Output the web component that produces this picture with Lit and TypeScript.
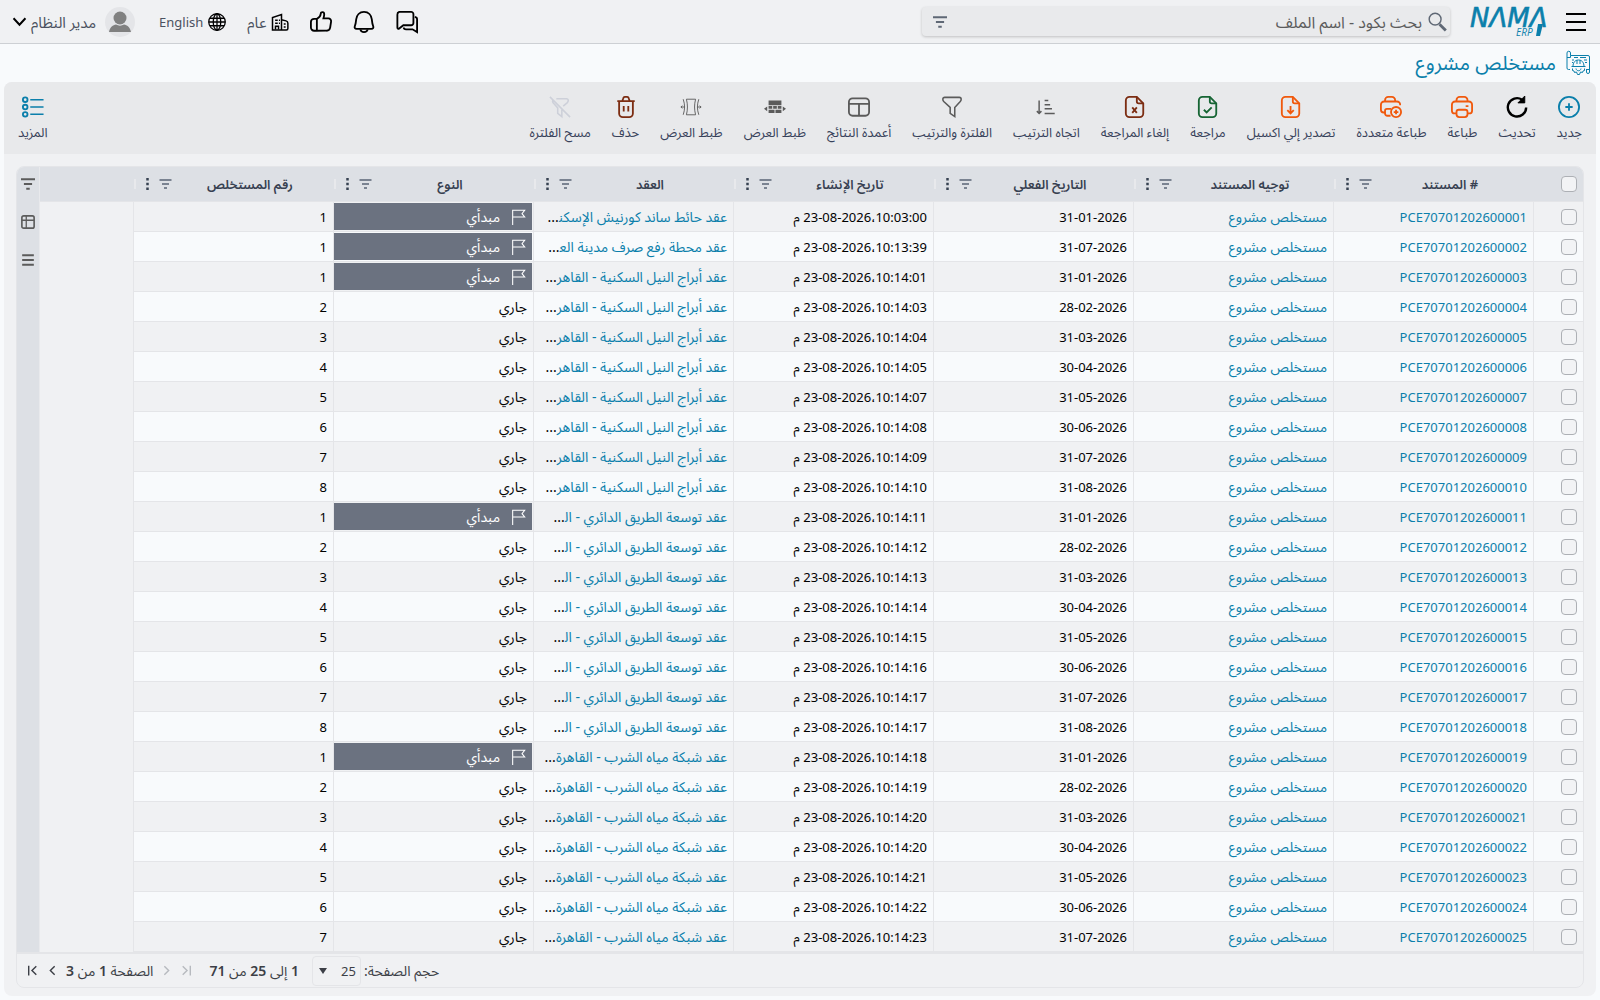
import { LitElement, html, css, svg, nothing } from "lit";
import { customElement, property, state } from "lit/decorators.js";

interface Invoice {
  code: string;
  date: string;
  created: string;
  contract: string;
  initial: boolean;
  number: number;
}

interface Tool {
  icon: string;
  label: string;
  tone?: string;
}

// short names; \u200d keeps the last letter in its joined form before the dots
const CONTRACTS = {
  wall: "عقد حائط ساند كورنيش الإسكن\u200d",
  station: "عقد محطة رفع صرف مدينة الع\u200d",
  towers: "عقد أبراج النيل السكنية - القاهر",
  road: "عقد توسعة الطريق الدائري - ال\u200d",
  water: "عقد شبكة مياه الشرب - القاهرة",
};

const MONTH_ENDS = ["31-01", "28-02", "31-03", "30-04", "31-05", "30-06", "31-07", "31-08"];

// contract, invoice number, month index, creation time
const SOURCE: [keyof typeof CONTRACTS, number, number, string][] = [
  ["wall", 1, 0, "10:03:00"],
  ["station", 1, 6, "10:13:39"],
  ["towers", 1, 0, "10:14:01"],
  ["towers", 2, 1, "10:14:03"],
  ["towers", 3, 2, "10:14:04"],
  ["towers", 4, 3, "10:14:05"],
  ["towers", 5, 4, "10:14:07"],
  ["towers", 6, 5, "10:14:08"],
  ["towers", 7, 6, "10:14:09"],
  ["towers", 8, 7, "10:14:10"],
  ["road", 1, 0, "10:14:11"],
  ["road", 2, 1, "10:14:12"],
  ["road", 3, 2, "10:14:13"],
  ["road", 4, 3, "10:14:14"],
  ["road", 5, 4, "10:14:15"],
  ["road", 6, 5, "10:14:16"],
  ["road", 7, 6, "10:14:17"],
  ["road", 8, 7, "10:14:17"],
  ["water", 1, 0, "10:14:18"],
  ["water", 2, 1, "10:14:19"],
  ["water", 3, 2, "10:14:20"],
  ["water", 4, 3, "10:14:20"],
  ["water", 5, 4, "10:14:21"],
  ["water", 6, 5, "10:14:22"],
  ["water", 7, 6, "10:14:23"],
];

const ROWS: Invoice[] = SOURCE.map(([contract, number, month, time], i) => ({
  code: `PCE707012026${String(i + 1).padStart(5, "0")}`,
  date: `${MONTH_ENDS[month]}-2026`,
  created: `23-08-2026،${time} م`,
  contract: CONTRACTS[contract],
  initial: number === 1,
  number,
}));

const COLUMNS = ["# المستند", "توجيه المستند", "التاريخ الفعلي", "تاريخ الإنشاء", "العقد", "النوع", "رقم المستخلص"];

const TOOLS: Tool[] = [
  { icon: "add", label: "جديد", tone: "blue" },
  { icon: "refresh", label: "تحديث", tone: "black" },
  { icon: "print", label: "طباعة", tone: "orange" },
  { icon: "printMany", label: "طباعة متعددة", tone: "orange" },
  { icon: "exportFile", label: "تصدير إلي اكسيل", tone: "orange" },
  { icon: "review", label: "مراجعة", tone: "green" },
  { icon: "unreview", label: "إلغاء المراجعة", tone: "red" },
  { icon: "sort", label: "اتجاه الترتيب" },
  { icon: "funnel", label: "الفلترة والترتيب" },
  { icon: "columns", label: "أعمدة النتائج" },
  { icon: "fitSolid", label: "ظبط العرض" },
  { icon: "fitOutline", label: "ظبط العرض" },
  { icon: "trash", label: "حذف", tone: "red" },
  { icon: "clearFilter", label: "مسح الفلترة", tone: "muted" },
];

const FILE = svg`<path d="M6 1h8l7 7v11a4 4 0 0 1-4 4H6a4 4 0 0 1-4-4V5a4 4 0 0 1 4-4z"/><path d="M14 1v5a2 2 0 0 0 2 2H21"/>`;

// every drawing sits on a 24 x 24 board
const ICONS: Record<string, unknown> = {
  add: svg`<circle cx="12" cy="12" r="11"/><path d="M12 8v8M8 12h8"/>`,
  refresh: svg`<path d="M22 12.500A10 10 0 1 1 17.500 4" stroke-width="2.600"/><path d="M20.500 0v7.500h-7.500z" fill="currentColor" stroke-width="1"/>`,
  print: svg`<path d="M6 6V4.500a3.500 3.500 0 0 1 3.500-3.500h5A3.500 3.500 0 0 1 18 4.500V6"/><path d="M6 19H4a3 3 0 0 1-3-3V9.500A3.500 3.500 0 0 1 4.500 6h15A3.500 3.500 0 0 1 23 9.500V16a3 3 0 0 1-3 3h-2"/><path d="M8.500 15h7a2.500 2.500 0 0 1 2.500 2.500V20a3 3 0 0 1-3 3H9a3 3 0 0 1-3-3v-2.500A2.500 2.500 0 0 1 8.500 15z"/><path d="M16 11h3"/>`,
  printMany: svg`<path d="M5.500 6V4.500A3.500 3.500 0 0 1 9 1h4a3.500 3.500 0 0 1 3.500 3.500V6"/><path d="M5.500 18H4a3 3 0 0 1-3-3V9.500A3.500 3.500 0 0 1 4.500 6h14A3.500 3.500 0 0 1 22 9.500V10"/><path d="M12 14H7.500a2 2 0 0 0-2 2v3a2.500 2.500 0 0 0 2.500 2.500h3.500"/><circle cx="17.500" cy="17.500" r="5.500"/><path d="M17.500 15v5M15 17.500h5"/>`,
  exportFile: svg`${FILE}<path d="M11.500 11v8M8 15.500l3.500 3.500 3.500-3.500"/>`,
  review: svg`${FILE}<path d="M7.500 15l3 3 5.500-5.500"/>`,
  unreview: svg`${FILE}<path d="M9 12.500l5 6M14 12.500l-5 6"/>`,
  sort: svg`<path d="M4.500 5v14M2 16.500l2.500 2.500 2.500-2.500M10.500 5h4M10.500 9.500h6M10.500 14h8M10.500 19h11" stroke-width="1.600"/>`,
  funnel: svg`<path d="M4 1.500h16a2 2 0 0 1 2 2c0 1-.4 1.800-1 2.500L15 12.500V22.500l-5-3.500v-6.500L3 6c-.6-.7-1-1.500-1-2.500a2 2 0 0 1 2-2z" stroke-width="1.700"/>`,
  columns: svg`<rect x="1" y="2.500" width="22" height="19" rx="4"/><path d="M1 8.500h22M12 8.500v13"/>`,
  fitSolid: svg`<g fill="currentColor" stroke="none"><path d="M5 5h14v5H5zM5 11h4v3H5zM10 11h4v3h-4zM15 11h4v3h-4zM5 15h6.500v3.500H5zM12.500 15H19v3.500h-6.500zM3.500 11.500v5L0 14zM20.500 11.500v5L24 14z"/></g>`,
  fitOutline: svg`<g stroke-width="1"><path d="M7 3.500h10c-1.500 6-1.500 11 0 17H7c1.500-6 1.500-11 0-17zM3.500 3.500c2 6 2 11 0 17M20.500 3.500c-2 6-2 11 0 17M1 12h4M19 12h4M2.500 10.500L1 12l1.500 1.500M21.500 10.500L23 12l-1.500 1.500"/></g>`,
  trash: svg`<path d="M2.500 5.500h19M8 5.500l1-3A2 2 0 0 1 10.800 1h2.400A2 2 0 0 1 15 2.500l1 3M4.500 6v13a4 4 0 0 0 4 4h7a4 4 0 0 0 4-4V6M9.500 11v6M14.500 11v6"/>`,
  clearFilter: svg`<path d="M1 1l22 22M8 3h11a2 2 0 0 1 2 2c0 1-.4 1.600-1 2.200L15.500 11M14 15v7.500L9.500 19v-6L5 8C3.500 6.500 3.500 5 5 4" stroke-width="1.700"/>`,
  more: svg`<circle cx="3.500" cy="4" r="2.500"/><circle cx="3.500" cy="12" r="2.500"/><circle cx="3.500" cy="20" r="2.500"/><path d="M9 4h14.500M9 12h14.500M9 20h14.500" stroke-width="1.700"/>`,
  chat: svg`<path d="M3.500 1h13A2.500 2.500 0 0 1 19 3.500V13a2.500 2.500 0 0 1-2.500 2.500H8L3.500 19c-1 .8-2 .3-2-1V4a3 3 0 0 1 2-3z"/><path d="M20.500 6.500c1.500.3 2.500 1 2.500 2.500v14l-5-3h-7c-1.500 0-2.500-.8-2.500-2"/>`,
  bell: svg`<path d="M12 1c5 0 8 3.500 8.500 8 .3 3 .5 5.500 1.500 7.500.7 1.700 0 3-2 3H4c-2 0-2.700-1.300-2-3 1-2 1.200-4.500 1.500-7.500C4 4.500 7 1 12 1z"/><path d="M8 20c.8 4 7.200 4 8 0"/>`,
  like: svg`<path d="M7.500 8.500h-3A3.500 3.500 0 0 0 1 12v6a3.500 3.500 0 0 0 3.500 3.500h3zM7.500 8.500c2.500-1 4-3 4.200-5.500.1-2.500 3.800-2.500 3.800.5 0 1.500-.3 3-.8 4.500H20a3 3 0 0 1 3 3.500L22 18a4 4 0 0 1-4 3.500H7.500z"/>`,
  building: svg`<path d="M2 22.500V6l12-4v20.500zM14 9l6 1.500c1.500.4 2.500 1.500 2.500 3v7a2 2 0 0 1-2 2H2"/><path d="M5.500 9.500H9M10.500 9.500H12M5.500 13.500H9M10.500 13.500H12M6 22v-4.500h4V22M17 14.500h2.500M17 18.500h2.500"/>`,
  globe: svg`<g stroke-width="1.700"><circle cx="12" cy="12" r="11"/><ellipse cx="12" cy="12" rx="5" ry="11"/><path d="M12 1v22M2.500 7h19M1 12h22M2.500 17h19"/></g>`,
  menu: svg`<path d="M0 2.500h24M0 12h24M0 21.500h24" stroke-width="2.400"/>`,
  chevron: svg`<path d="M1 6l11 12L23 6" stroke-width="3.600"/>`,
  search: svg`<circle cx="9" cy="9" r="7.500" stroke-width="1.800"/><path d="M14.500 15.500l8 8" stroke-width="3.600"/>`,
  filter: svg`<path d="M0 4h24M5 12h14M9 20h6" stroke-width="3.400"/>`,
  dots: svg`<g fill="#374151" stroke="none"><rect x="9.500" y="0" width="5" height="5"/><rect x="9.500" y="9.500" width="5" height="5"/><rect x="9.500" y="19" width="5" height="5"/></g>`,
  grid: svg`<rect x="1.500" y="1.500" width="21" height="21" rx="3" stroke-width="2.800"/><path d="M1.500 9h21M9 1.500v21" stroke-width="2.200"/>`,
  lines: svg`<path d="M2 4h20M2 12h20M2 20h20" stroke-width="3.400"/>`,
  flag: svg`<path d="M4 24V2h18l-4 5 4 5H4" stroke-width="1.600"/>`,
  right: svg`<path d="M8 4l8 8-8 8" stroke-width="2.600"/>`,
  left: svg`<path d="M16 4l-8 8 8 8" stroke-width="2.600"/>`,
  rightEnd: svg`<path d="M5 4l8 8-8 8M19 3v18" stroke-width="2.600"/>`,
  leftEnd: svg`<path d="M19 4l-8 8 8 8M5 3v18" stroke-width="2.600"/>`,
  project: svg`<g stroke-width="1"><path d="M4 18.500H2.500A1.500 1.500 0 0 1 1 17V2a1.500 1.500 0 0 1 3.500 0v2.500H22a1.500 1.500 0 0 1 1.500 1.500v15a1.500 1.500 0 0 1-3 0v-2.500M1 6.500h3.500v-2M20 18.500h3"/><path d="M5.500 15.500h14M7 15.500c0-4 2-6.500 5.500-6.500s5.500 2.500 5.500 6.500M11 9v4M14 9v4M8 6.500h4M14 6.500h6M6 9h2M18 9h3M6 11.500h1M19 11.500h2"/><path d="M6.500 17.500v2l1.500.5.500 1.500 2-.5 1 2.500h2l1-2.500 2 .5.500-1.500 1.500-.5v-2M10 17.500c.5 3 4.500 3 5 0"/></g>`,
};

@customElement("app-icon")
export class AppIcon extends LitElement {
  @property() name = "";

  static styles = css`
    :host {
      display: block;
      flex: none;
      width: 22px;
      height: 22px;
    }
    svg {
      display: block;
      width: 100%;
      height: 100%;
      overflow: visible;
      fill: none;
      stroke: currentColor;
      stroke-width: 2;
    }
  `;

  render() {
    return html`<svg viewBox="0 0 24 24" aria-hidden="true">${ICONS[this.name] ?? nothing}</svg>`;
  }
}

@customElement("app-root")
export class AppRoot extends LitElement {
  @state() private selected = new Set<string>();

  static styles = css`
    :host {
      display: block;
      min-height: 100vh;
      box-sizing: border-box;
      direction: rtl;
      background: #f8fafc;
      color: #000;
      font-family: "Segoe UI", "Noto Sans", "Noto Sans Arabic", sans-serif;
      font-size: 14px;
      line-height: 20px;
    }
    *,
    *::before {
      box-sizing: border-box;
    }
    button,
    input,
    select {
      font: inherit;
      color: inherit;
      margin: 0;
    }
    button {
      padding: 0;
      border: 0;
      background: none;
      cursor: pointer;
    }
    a {
      color: #0b7fab;
      text-decoration: none;
    }

    /* top bar */
    header {
      display: flex;
      align-items: center;
      height: 44px;
      padding: 0 14px 0 13px;
      background: #f0f1f3;
      border-bottom: 1px solid #cdd0d4;
    }
    .menu app-icon {
      width: 20px;
      height: 20px;
    }
    .logo {
      margin-inline: 16px 20px;
    }
    .logo svg {
      display: block;
      width: 80px;
      height: 30px;
      overflow: visible;
      direction: ltr;
      fill: #0b7fab;
      font-style: italic;
    }
    .logo .name {
      font-family: "DejaVu Sans", sans-serif;
      font-size: 26px;
      stroke: #0b7fab;
      stroke-width: 0.6;
    }
    .logo .kind {
      font-family: "Open Sans", sans-serif;
      font-size: 10px;
    }
    .search {
      display: flex;
      align-items: center;
      width: 33vw;
      height: 29px;
      padding: 0 3px 0 10px;
      border-radius: 4px;
      background: #e9eaec;
      box-shadow: 0 1px 3px rgba(0, 0, 0, 0.2);
      color: #5f6875;
    }
    .search label app-icon {
      width: 19px;
      height: 19px;
    }
    .search input {
      flex: 1;
      min-width: 0;
      height: 28px;
      padding: 0 6px;
      border: 0;
      outline: 0;
      background: none;
      font-size: 16px;
    }
    .search input::placeholder {
      color: #5c5c5c;
      opacity: 1;
    }
    .search button app-icon {
      width: 16px;
      height: 14px;
    }
    .actions {
      display: flex;
      align-items: center;
      gap: 21px;
      margin-inline-start: auto;
    }
    .actions a,
    .actions button {
      display: flex;
      align-items: center;
      gap: 5px;
      color: #4b5260;
      font-size: 15px;
    }
    .actions a.latin {
      font-size: 13px;
    }
    .actions app-icon {
      color: #000;
    }
    .small {
      width: 18px;
      height: 18px;
    }
    .avatar {
      display: block;
      width: 30px;
      height: 30px;
      margin-inline: 3px 4px;
    }
    .arrow {
      width: 13px;
      height: 13px;
    }

    h1 {
      display: flex;
      align-items: center;
      gap: 10px;
      height: 38px;
      margin: 0;
      padding: 0 10px;
      font-size: 20px;
      font-weight: 400;
      color: #0b7fab;
    }
    h1 app-icon {
      width: 24px;
      height: 26px;
    }

    .panel {
      margin: 0 4px 4px;
      border-radius: 8px;
      background: #f0f1f3;
      overflow: hidden;
    }
    .toolbar {
      display: flex;
      align-items: flex-start;
      gap: 1px;
      height: 72px;
      padding: 14px 4px 0;
      background: #e8e9eb;
    }
    .toolbar button {
      display: flex;
      flex-direction: column;
      align-items: center;
      gap: 5px;
      padding: 0 10px;
      font-size: 13px;
      line-height: 18px;
      color: #37415a;
      white-space: nowrap;
    }
    .toolbar app-icon {
      color: #5b5b5b;
    }
    .toolbar .last {
      margin-inline-start: auto;
    }
    .toolbar .blue {
      color: #0b7fab;
    }
    .toolbar .black {
      color: #000;
    }
    .toolbar .orange {
      color: #f0590d;
    }
    .toolbar .green {
      color: #166534;
    }
    .toolbar .red {
      color: #7c2d12;
    }
    .toolbar .muted {
      color: #cdd0d9;
    }

    /* data grid */
    .grid {
      margin: 12px 12px 8px;
      border: 1px solid #e4e5e8;
      border-radius: 8px;
      overflow: hidden;
    }
    .body {
      display: flex;
    }
    .side {
      display: flex;
      flex-direction: column;
      align-items: center;
      gap: 24px;
      width: 23px;
      padding-top: 10px;
      background: #dde0e5;
      border-right: 1px solid #e8e9ec;
      color: #5b5b5b;
    }
    .side app-icon {
      width: 14px;
      height: 14px;
    }
    table {
      flex: 1;
      width: 0;
      table-layout: fixed;
      border-spacing: 0;
    }
    .pick-col {
      width: 50px;
    }
    .data-col {
      width: 200px;
    }
    th {
      height: 35px;
      padding: 0;
      background: #dde0e5;
      border-bottom: 1px solid #e4e5e8;
      font-size: 13px;
      font-weight: 600;
      color: #374151;
    }
    .head {
      display: flex;
      align-items: center;
      gap: 5px;
      padding-inline: 10px 8px;
      position: relative;
    }
    .head::before {
      content: "";
      position: absolute;
      left: 1px;
      top: 5px;
      width: 2px;
      height: 10px;
      background: #e8e9ec;
    }
    .head span {
      flex: 1;
    }
    .head button {
      color: #5a6475;
    }
    .head app-icon {
      width: 13px;
      height: 12px;
    }
    td {
      height: 30px;
      padding: 0 6px;
      border-bottom: 1px solid #e4e5e8;
      border-left: 1px solid #e4e5e8;
      background: #f0f1f3;
      overflow: hidden;
      white-space: nowrap;
    }
    tr:nth-child(even) td {
      background: #f8fafc;
    }
    tbody td.rest {
      background: none;
      border: 0;
    }
    .latin {
      font-size: 13px;
    }
    .pick {
      padding: 0 6px;
    }
    input[type="checkbox"] {
      appearance: none;
      display: block;
      width: 16px;
      height: 16px;
      border: 1px solid #adb0b5;
      border-radius: 4px;
      background: #f2f3f5;
    }
    input[type="checkbox"]:checked {
      background: #0b7fab;
    }
    td.state {
      padding: 0 1px 0 0;
    }
    .badge {
      display: flex;
      align-items: center;
      gap: 10px;
      height: 27px;
      padding: 0 6px;
      background: #6b7280;
      color: #fff;
    }
    .badge app-icon {
      width: 16px;
      height: 16px;
    }

    footer {
      display: flex;
      align-items: center;
      justify-content: flex-end;
      height: 35px;
      padding-left: 9px;
      border-top: 2px solid #e4e5e8;
      color: #3c3f46;
    }
    footer b {
      font-weight: 600;
    }
    footer label {
      margin-inline-end: 3px;
    }
    footer p {
      margin: 0;
    }
    .size {
      position: relative;
      color: #3c3f46;
    }
    .size::before {
      content: "";
      position: absolute;
      left: 7px;
      top: 12px;
      border: 4px solid transparent;
      border-top: 6px solid #3c3f46;
      border-bottom: 0;
      pointer-events: none;
    }
    select {
      appearance: none;
      display: block;
      width: 49px;
      height: 30px;
      padding: 0 4px;
      border: 1px solid #e4e5e8;
      border-radius: 4px;
      background: none;
    }
    .range {
      padding-inline: 13px 16px;
    }
    .pages {
      display: flex;
      align-items: center;
      gap: 7px;
    }
    .pages app-icon {
      width: 13px;
      height: 13px;
    }
    .pages button:disabled {
      color: #b7babf;
    }
  `;

  private toggle(code: string) {
    const next = new Set(this.selected);
    if (!next.delete(code)) {
      next.add(code);
    }
    this.selected = next;
  }

  private toggleAll() {
    this.selected = this.selected.size === ROWS.length ? new Set() : new Set(ROWS.map((r) => r.code));
  }

  renderHeader() {
    return html`
      <header>
        <button class="menu" aria-label="القائمة"><app-icon name="menu"></app-icon></button>
        <a class="logo" href="#">
          <svg viewBox="0 0 80 30" role="img">
            <text class="name" x="0" y="20">NΛMΛ</text>
            <text class="kind" x="46" y="29">ERP</text>
            <path d="M68 17h5l-3 12h-4z" />
          </svg>
        </a>
        <form class="search" role="search">
          <label for="query"><app-icon name="search"></app-icon></label>
          <input id="query" type="text" placeholder="بحث بكود - اسم الملف" />
          <button type="button" aria-label="فلترة"><app-icon name="filter"></app-icon></button>
        </form>
        <nav class="actions">
          <button aria-label="المحادثات"><app-icon name="chat"></app-icon></button>
          <button aria-label="التنبيهات"><app-icon name="bell"></app-icon></button>
          <button aria-label="الموافقات"><app-icon name="like"></app-icon></button>
          <button><app-icon class="small" name="building"></app-icon>عام</button>
          <a class="latin" href="#"><app-icon class="small" name="globe"></app-icon>English</a>
          <button>
            <svg class="avatar" viewBox="0 0 30 30" aria-hidden="true">
              <circle cx="15" cy="15" r="15" fill="#e4e5e8" />
              <circle cx="15" cy="11" r="6.500" fill="#808080" />
              <path d="M4 25c1-5 4-7 7-7.500 2.500 1.500 5.500 1.500 8 0 3 .5 6 2.500 7 7.500z" fill="#808080" />
            </svg>
            مدير النظام
            <app-icon class="arrow" name="chevron"></app-icon>
          </button>
        </nav>
      </header>
    `;
  }

  renderTool(tool: Tool, last = false) {
    return html`
      <button class=${last ? "last" : ""}>
        <app-icon class=${tool.tone ?? ""} name=${tool.icon}></app-icon>
        <span>${tool.label}</span>
      </button>
    `;
  }

  renderRow(row: Invoice) {
    return html`
      <tr>
        <td class="pick">
          <input
            type="checkbox"
            aria-label=${row.code}
            .checked=${this.selected.has(row.code)}
            @change=${() => this.toggle(row.code)}
          />
        </td>
        <td class="latin"><a href="#">${row.code}</a></td>
        <td><a href="#">مستخلص مشروع</a></td>
        <td class="latin">${row.date}</td>
        <td class="latin">${row.created}</td>
        <td><a href="#">${row.contract}</a>...</td>
        ${row.initial
          ? html`<td class="state"><div class="badge"><app-icon name="flag"></app-icon>مبدأي</div></td>`
          : html`<td>جاري</td>`}
        <td class="latin">${row.number}</td>
        <td class="rest"></td>
      </tr>
    `;
  }

  renderTable() {
    return html`
      <table>
        <colgroup>
          <col class="pick-col" />
          ${COLUMNS.map(() => html`<col class="data-col" />`)}
          <col />
        </colgroup>
        <thead>
          <tr>
            <th class="pick">
              <input
                type="checkbox"
                aria-label="تحديد الكل"
                .checked=${this.selected.size === ROWS.length}
                @change=${this.toggleAll}
              />
            </th>
            ${COLUMNS.map(
              (name) => html`
                <th>
                  <div class="head">
                    <span>${name}</span>
                    <button aria-label="فلترة"><app-icon name="filter"></app-icon></button>
                    <button aria-label="خيارات"><app-icon name="dots"></app-icon></button>
                  </div>
                </th>
              `
            )}
            <th></th>
          </tr>
        </thead>
        <tbody>
          ${ROWS.map((row) => this.renderRow(row))}
        </tbody>
      </table>
    `;
  }

  renderFooter() {
    return html`
      <footer>
        <label for="size">حجم الصفحة:</label>
        <div class="size">
          <select id="size" class="latin">
            <option>25</option>
            <option>50</option>
            <option>100</option>
          </select>
        </div>
        <p class="range"><b>1</b> إلى <b>25</b> من <b>71</b></p>
        <div class="pages">
          <button disabled aria-label="الأولى"><app-icon name="rightEnd"></app-icon></button>
          <button disabled aria-label="السابقة"><app-icon name="right"></app-icon></button>
          <p>الصفحة <b>1</b> من <b>3</b></p>
          <button aria-label="التالية"><app-icon name="left"></app-icon></button>
          <button aria-label="الأخيرة"><app-icon name="leftEnd"></app-icon></button>
        </div>
      </footer>
    `;
  }

  render() {
    return html`
      ${this.renderHeader()}
      <main>
        <h1><app-icon name="project"></app-icon>مستخلص مشروع</h1>
        <section class="panel">
          <div class="toolbar">
            ${TOOLS.map((tool) => this.renderTool(tool))}
            ${this.renderTool({ icon: "more", label: "المزيد", tone: "blue" }, true)}
          </div>
          <div class="grid">
            <div class="body">
              ${this.renderTable()}
              <aside class="side">
                <button aria-label="فلترة"><app-icon name="filter"></app-icon></button>
                <button aria-label="الأعمدة"><app-icon name="grid"></app-icon></button>
                <button aria-label="القائمة"><app-icon name="lines"></app-icon></button>
              </aside>
            </div>
            ${this.renderFooter()}
          </div>
        </section>
      </main>
    `;
  }
}
